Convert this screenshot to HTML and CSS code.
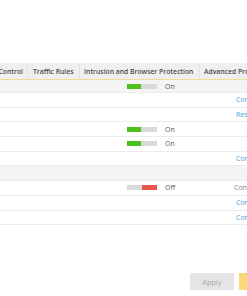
FILE: index.html
```html
<!DOCTYPE html>
<html lang="en">
<head>
  <meta charset="UTF-8">
  <title>Protection</title>
  <link rel="stylesheet" href="styles.css">
</head>
<body>
  <div class="page">
    <div class="grid">
      <div class="row head">
        <div class="c c1"><span>Access Control</span></div>
        <div class="c c2">Traffic Rules</div>
        <div class="c c3">Intrusion and Browser Protection</div>
        <div class="c c4">Advanced Protection</div>
      </div>
      <div class="row group first">
        <div class="c c1"></div><div class="c c2"></div>
        <div class="c c3"><span class="bar on"><i></i></span>On</div>
        <div class="c c4"></div>
      </div>
      <div class="row">
        <div class="c c1"></div><div class="c c2"></div><div class="c c3"></div>
        <div class="c c4"><a class="link">Configure</a></div>
      </div>
      <div class="row">
        <div class="c c1"></div><div class="c c2"></div><div class="c c3"></div>
        <div class="c c4"><a class="link">Reset</a></div>
      </div>
      <div class="row">
        <div class="c c1"></div><div class="c c2"></div>
        <div class="c c3"><span class="bar on"><i></i></span>On</div>
        <div class="c c4"></div>
      </div>
      <div class="row">
        <div class="c c1"></div><div class="c c2"></div>
        <div class="c c3"><span class="bar on"><i></i></span>On</div>
        <div class="c c4"></div>
      </div>
      <div class="row">
        <div class="c c1"></div><div class="c c2"></div><div class="c c3"></div>
        <div class="c c4"><a class="link">Configure</a></div>
      </div>
      <div class="row group"></div>
      <div class="row">
        <div class="c c1"></div><div class="c c2"></div>
        <div class="c c3"><span class="bar off"><i></i></span>Off</div>
        <div class="c c4"><a class="link muted">Configure</a></div>
      </div>
      <div class="row">
        <div class="c c1"></div><div class="c c2"></div><div class="c c3"></div>
        <div class="c c4"><a class="link">Configure</a></div>
      </div>
      <div class="row">
        <div class="c c1"></div><div class="c c2"></div><div class="c c3"></div>
        <div class="c c4"><a class="link">Configure</a></div>
      </div>
    </div>
    <div class="footer">
      <button class="btn apply">Apply</button>
      <button class="btn ok">OK</button>
    </div>
  </div>
</body>
</html>
```

FILE: styles.css
```css
body { margin: 0; padding: 0; background: #fff; font-family: "Open Sans", "DejaVu Sans", sans-serif; font-size: 7px; color: #555; }
.page { width: 247px; height: 296px; overflow: hidden; padding-top: 63px; box-sizing: border-box; }
.grid { width: 247px; }
.row { display: flex; height: 14.7px; box-sizing: border-box; border-bottom: 1px solid #ececec; white-space: nowrap; }
.row.first { height: 13px; }
.row.group { background: #f4f4f4; }
.row.head { height: 17px; background: #efefef; border-bottom: 1px solid #f1dd98; font-weight: 600; font-size: 6.8px; color: #4a4a4a; }
.c { display: flex; align-items: center; overflow: hidden; box-sizing: border-box; }
.c1 { width: 28px; justify-content: flex-end; padding-right: 4px; }
.c2 { width: 52px; padding-left: 5px; }
.c3 { width: 120px; padding-left: 4px; }
.c4 { flex: 1; padding-left: 4px; }
.head .c { border-right: 1px solid #e2e2e2; }
.head .c4 { border-right: 0; }
.row:not(.head) .c3 { padding-left: 47px; }
.row:not(.head) .c4 { padding-left: 36px; }
.bar { display: inline-block; width: 30px; height: 5px; background: #d9d9d9; margin-right: 8px; }
.bar i { display: block; height: 5px; width: 14px; background: #4cc31c; }
.bar.off i { background: #e9544f; margin-left: 15px; width: 15px; }
.link { color: #4aa3d8; }
.link.muted { color: #888; margin-left: -2px; }
.footer { display: flex; gap: 5px; padding: 0 0 0 190px; margin-top: 48px; }
.btn { flex: none; height: 17px; border: 0; padding: 0; font-family: inherit; font-size: 7.5px; }
.apply { width: 44px; background: #e5e5e5; color: #aaa; }
.ok { width: 44px; background: #f7d977; color: #fff; }
```
